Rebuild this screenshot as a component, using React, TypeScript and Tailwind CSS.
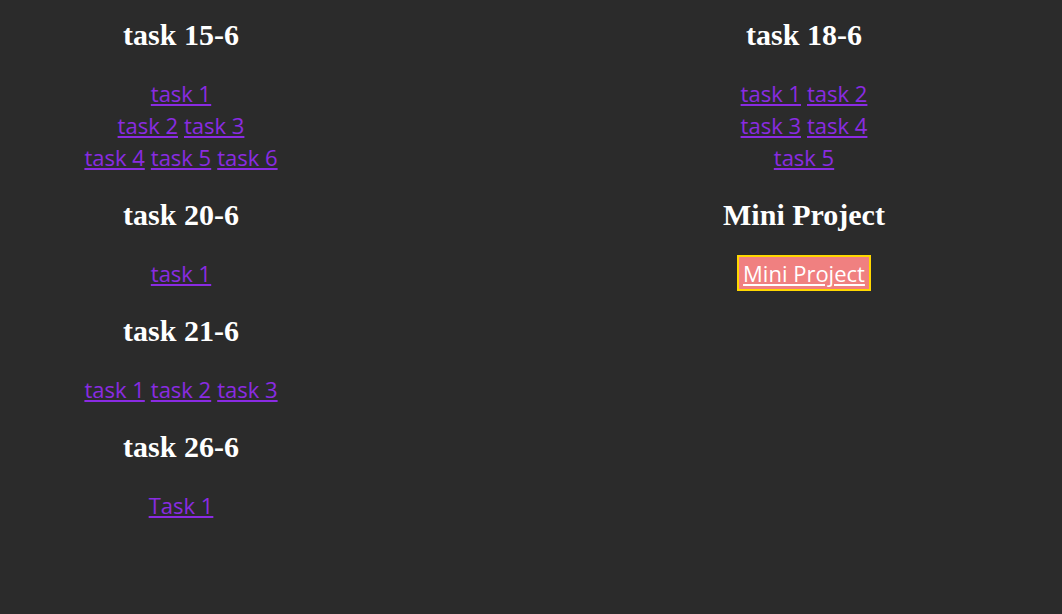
import React from "react";

const linkCls =
  "text-[#8a2be2] underline [font-family:'Comic_Sans_MS','Open_Sans',sans-serif] text-[22px]";

function Links({ rows }: { rows: string[][] }) {
  return (
    <div className="mt-[28px] mb-[1px] flex flex-col items-center leading-[32px]">
      {rows.map((r, i) => (
        <div key={i} className="flex gap-[6px] justify-center">
          {r.map((t) => (
            <a key={t} href="#" className={linkCls}>
              {t}
            </a>
          ))}
        </div>
      ))}
    </div>
  );
}

function H({ children, first }: { children: React.ReactNode; first?: boolean }) {
  return (
    <h2
      className={`${first ? "mt-[21px]" : "mt-[27px]"} text-[30px] leading-[28px] font-bold text-white [font-family:'Liberation_Serif',serif]`}
    >
      {children}
    </h2>
  );
}

export default function App() {
  return (
    <div className="w-[1062px] h-[614px] bg-[#2b2b2b] flex">
      <div className="w-[362px] flex flex-col items-center text-center">
        <H first>task 15-6</H>
        <Links rows={[["task 1"], ["task 2", "task 3"], ["task 4", "task 5", "task 6"]]} />
        <H>task 20-6</H>
        <Links rows={[["task 1"]]} />
        <H>task 21-6</H>
        <Links rows={[["task 1", "task 2", "task 3"]]} />
        <H>task 26-6</H>
        <Links rows={[["Task 1"]]} />
      </div>
      <div className="ml-[242px] w-[400px] flex flex-col items-center text-center">
        <H first>task 18-6</H>
        <Links rows={[["task 1", "task 2"], ["task 3", "task 4"], ["task 5"]]} />
        <H>Mini Project</H>
        <div className="mt-[26px]">
          <a
            href="#"
            className="inline-block border-2 border-[#ffd700] bg-[#f08080] text-white underline px-[4px] leading-[32px] [font-family:'Comic_Sans_MS','Open_Sans',sans-serif] text-[22px]"
          >
            Mini Project
          </a>
        </div>
      </div>
    </div>
  );
}
